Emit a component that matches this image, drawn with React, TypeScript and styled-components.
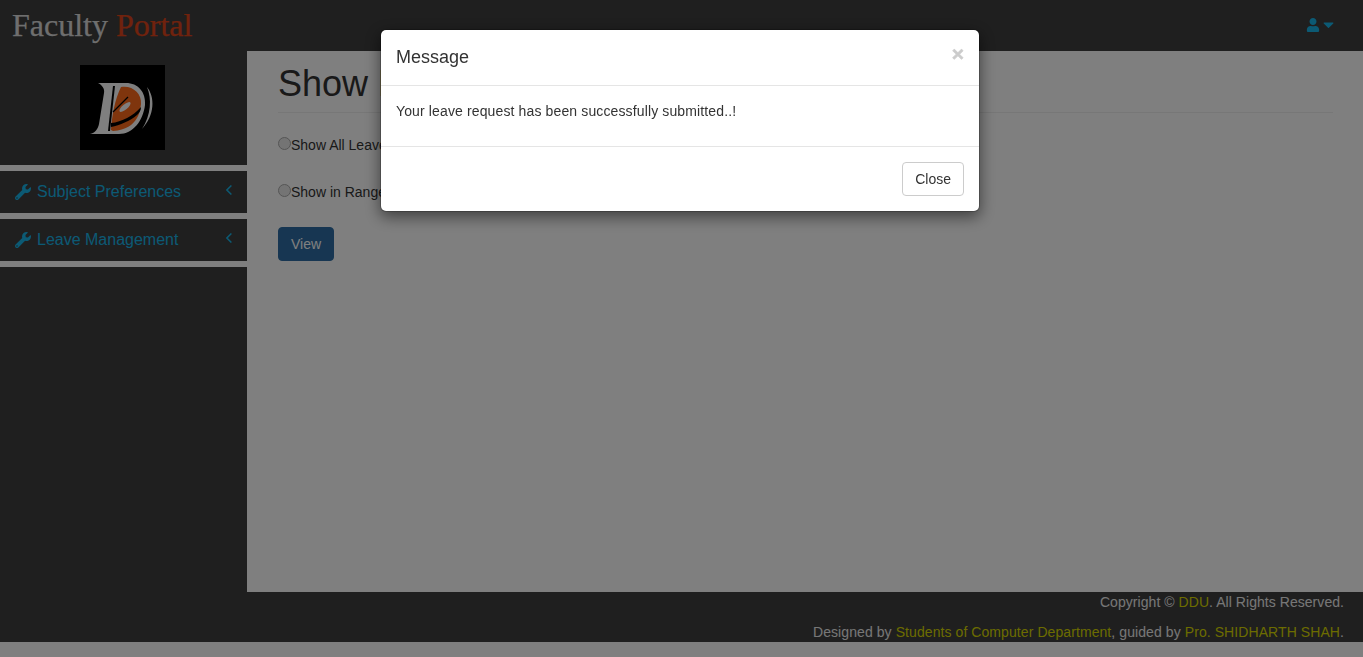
import React from "react";
import styled, { createGlobalStyle } from "styled-components";
import { FaWrench, FaUser, FaCaretDown } from "react-icons/fa";

const Global = createGlobalStyle`
  * { box-sizing: border-box; }
  html, body { margin: 0; height: 100%; background: #fff; overflow: hidden; }
  body { font-family: "Liberation Sans", Arial, sans-serif; font-size: 14px; line-height: 20px; color: #333; }
`;

const Page = styled.div`
  display: flex;
  flex-direction: column;
  width: 100%;
`;

const Navbar = styled.header`
  height: 51px;
  background: #3e3e3e;
  display: flex;
  align-items: center;
  justify-content: space-between;
  padding: 0 26px 2px 12px;
`;

const Brand = styled.div`
  font-family: "Liberation Serif", "Times New Roman", serif;
  font-size: 32px;
  line-height: 36px;
  color: #ddd;
  white-space: nowrap;
  -webkit-text-stroke: 0.25px currentColor;
`;

const BrandAccent = styled.span`
  color: #e0451a;
`;

const UserMenu = styled.div`
  display: flex;
  align-items: center;
  color: #18b4e8;
`;

const Main = styled.div`
  display: flex;
  height: 541px;
`;

const Sidebar = styled.aside`
  width: 247px;
  flex: none;
  background: #3e3e3e;
  padding-top: 14px;
`;

const LogoWrap = styled.div`
  display: flex;
  justify-content: center;
  padding-right: 2px;
  height: 106px;
  border-bottom: 6px solid #fff;
`;

const LogoBox = styled.svg`
  width: 85px;
  height: 85px;
  display: block;
`;

const MenuItem = styled.div`
  height: 48px;
  border-bottom: 6px solid #fff;
  display: flex;
  align-items: center;
  padding: 0 15px;
  color: #18b4e8;
  font-size: 16px;
`;

const MenuLabel = styled.span`
  margin-left: 6px;
  flex: 1;
`;

const MenuArrow = styled.svg`
  width: 6px;
  height: 10px;
  margin-top: -5px;
  fill: none;
  stroke: currentColor;
  stroke-width: 1.5;
`;

const Content = styled.main`
  flex: 1;
  padding: 0 30px 0 31px;
  background: #fff;
`;

const PageHeader = styled.div`
  border-bottom: 1px solid #eee;
  height: 62px;
  margin-bottom: 20px;
  padding-top: 13px;
`;

const Title = styled.h1`
  margin: 0;
  font-size: 36px;
  font-weight: 500;
  line-height: 40px;
  color: #333;
`;

const TitleAccent = styled.span`
  color: #b08a3a;
`;

const RadioRow = styled.label`
  display: flex;
  align-items: flex-start;
  height: 47px;
  padding-top: 2px;
  white-space: nowrap;
`;

const Radio = styled.input`
  appearance: none;
  margin: 2px 0 0;
  width: 13px;
  height: 13px;
  border: 1px solid #aaa;
  border-radius: 50%;
  background: #e8e8e8;
`;

const ViewButton = styled.button`
  display: block;
  width: 56px;
  height: 34px;
  background: #2e6da4;
  border: 1px solid #2e6da4;
  border-radius: 4px;
  color: #fff;
  font: 14px/20px "Liberation Sans", Arial, sans-serif;
  padding: 0;
`;

const Footer = styled.footer`
  height: 50px;
  background: #3e3e3e;
  color: #eee;
  padding-right: 19px;
  text-align: right;
`;

const FooterLine = styled.p<{ $spacing: number }>`
  margin: 0;
  height: 30px;
  line-height: 20px;
  letter-spacing: ${(p) => p.$spacing}px;
`;

const FooterLink = styled.span`
  color: #d8d800;
`;

const Backdrop = styled.div`
  position: fixed;
  inset: 0;
  background: rgba(0, 0, 0, 0.5);
`;

const Modal = styled.div`
  position: fixed;
  top: 29px;
  left: 380px;
  width: 600px;
  background: #fff;
  border: 1px solid rgba(0, 0, 0, 0.2);
  border-radius: 6px;
  background-clip: padding-box;
  box-shadow: 0 5px 15px rgba(0, 0, 0, 0.5);
`;

const ModalHeader = styled.div`
  display: flex;
  justify-content: space-between;
  align-items: flex-start;
  padding: 15px;
  border-bottom: 1px solid #e5e5e5;
`;

const ModalTitle = styled.h4`
  margin: 0;
  font-size: 18px;
  font-weight: 500;
  line-height: 25px;
  color: #333;
`;

const CloseX = styled.button`
  border: 0;
  background: none;
  padding: 0;
  margin-top: -2px;
  font: bold 21px/21px "Liberation Sans", Arial, sans-serif;
  color: #000;
  opacity: 0.2;
  -webkit-text-stroke: 0.6px #000;
`;

const ModalBody = styled.div`
  padding: 15px;
`;

const ModalText = styled.p`
  margin: 0 0 10px;
  letter-spacing: 0.13px;
`;

const ModalFooter = styled.div`
  display: flex;
  justify-content: flex-end;
  padding: 15px;
  border-top: 1px solid #e5e5e5;
`;

const CloseButton = styled.button`
  height: 34px;
  padding: 6px 12px;
  background: #fff;
  border: 1px solid #ccc;
  border-radius: 4px;
  color: #333;
  font: 14px/20px "Liberation Sans", Arial, sans-serif;
`;

const Logo = () => (
  <LogoBox viewBox="0 0 85 85" aria-label="DDU logo">
    <rect width="85" height="85" fill="#000" />
    <path
      d="M18 18L46 18C58 18 66 27 65 40C63 56 53 69 39 69L10 69C15 68 18 64 19 59L24 28C25 24 22 20 18 18Z"
      fill="#fff"
    />
    <path d="M33 21L35 21L30 66L28 66Z" fill="#000" />
    <path
      d="M41 22C52 20 62 28 61 39C60 46 59 50 57 53C53 60 46 65 33 66L31 65C32 50 35 34 41 22Z"
      fill="#ff6a1a"
    />
    <path d="M31 58C42 57 53 51 61 42C61 46 59 48 57 50C50 56 40 60 31 62Z" fill="#000" />
    <path d="M33 47L48 32" stroke="#000" strokeWidth="1.2" />
    <ellipse cx="45" cy="42" rx="7" ry="2.5" transform="rotate(-40 45 42)" fill="#fff" />
    <path d="M67 22C75 32 75 50 62 64C71 50 72 34 67 22Z" fill="#fff" />
  </LogoBox>
);

const AngleLeft = () => (
  <MenuArrow viewBox="0 0 6 10" aria-hidden="true">
    <polyline points="5.4,0.5 0.9,5 5.4,9.5" />
  </MenuArrow>
);

export default function App() {
  return (
    <Page>
      <Global />
      <Navbar>
        <Brand>
          Faculty <BrandAccent>Portal</BrandAccent>
        </Brand>
        <UserMenu>
          <FaUser size={14} />
          <FaCaretDown size={17} />
        </UserMenu>
      </Navbar>
      <Main>
        <Sidebar>
          <LogoWrap>
            <Logo />
          </LogoWrap>
          <MenuItem>
            <FaWrench size={16} />
            <MenuLabel>Subject Preferences</MenuLabel>
            <AngleLeft />
          </MenuItem>
          <MenuItem>
            <FaWrench size={16} />
            <MenuLabel>Leave Management</MenuLabel>
            <AngleLeft />
          </MenuItem>
        </Sidebar>
        <Content>
          <PageHeader>
            <Title>
              Show <TitleAccent>Leave</TitleAccent>
            </Title>
          </PageHeader>
          <RadioRow>
            <Radio type="radio" name="r" />
            Show All Leave
          </RadioRow>
          <RadioRow>
            <Radio type="radio" name="r" />
            Show in Range
          </RadioRow>
          <ViewButton>View</ViewButton>
        </Content>
      </Main>
      <Footer>
        <FooterLine $spacing={0.05}>
          Copyright © <FooterLink>DDU</FooterLink>. All Rights Reserved.
        </FooterLine>
        <FooterLine $spacing={0.08}>
          Designed by <FooterLink>Students of Computer Department</FooterLink>, guided by{" "}
          <FooterLink>Pro. SHIDHARTH SHAH</FooterLink>.
        </FooterLine>
      </Footer>
      <Backdrop />
      <Modal>
        <ModalHeader>
          <ModalTitle>Message</ModalTitle>
          <CloseX>×</CloseX>
        </ModalHeader>
        <ModalBody>
          <ModalText>Your leave request has been successfully submitted..!</ModalText>
        </ModalBody>
        <ModalFooter>
          <CloseButton>Close</CloseButton>
        </ModalFooter>
      </Modal>
    </Page>
  );
}
